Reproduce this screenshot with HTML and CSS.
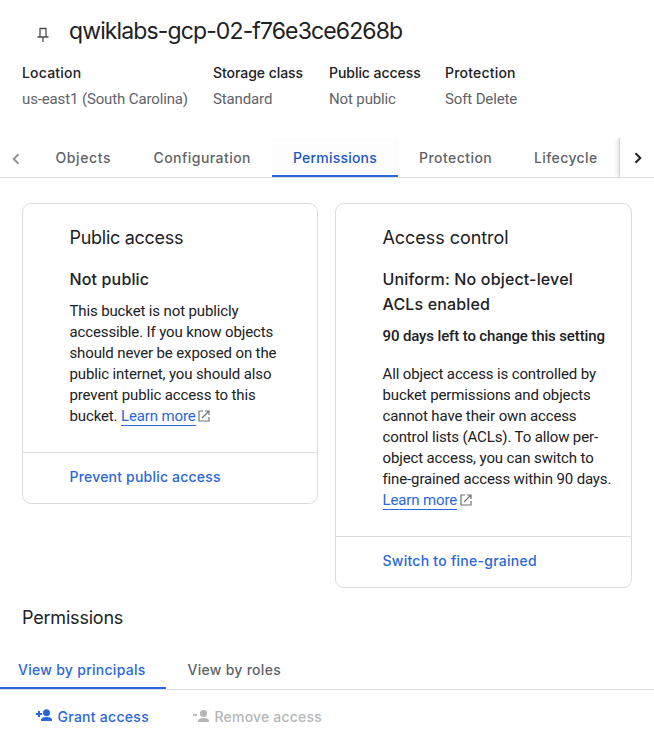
FILE: index.html
```html
<!DOCTYPE html>
<html lang="en">
<head>
<meta charset="utf-8">
<title>Bucket details</title>
<link rel="stylesheet" href="styles.css">
</head>
<body>
<header class="head">
  <svg class="pin" viewBox="0 0 12 16"><path d="M2.500 1.500h7M3 1v8.500M9 1v8.500M.500 10h11M6 10v5" fill="none" stroke="#4c4f52" stroke-width="1.300"/></svg>
  <h1>qwiklabs-gcp-02-f76e3ce6268b</h1>
</header>
<dl class="facts">
  <div><dt class="location">Location</dt><dd>us-east1 (South Carolina)</dd></div>
  <div><dt class="storage">Storage class</dt><dd>Standard</dd></div>
  <div><dt class="storage">Public access</dt><dd>Not public</dd></div>
  <div><dt class="location">Protection</dt><dd>Soft Delete</dd></div>
</dl>
<nav class="tabs">
  <span class="prev"><svg viewBox="0 0 10 12"><path d="M7.500 1.200L2.700 6l4.800 4.800" fill="none" stroke="#969696" stroke-width="2"/></svg></span>
  <a class="tab objects">Objects</a>
  <a class="tab configuration">Configuration</a>
  <a class="tab permissions active">Permissions</a>
  <a class="tab protection">Protection</a>
  <a class="tab lifecycle">Lifecycle</a>
  <span class="next"><svg viewBox="0 0 10 12"><path d="M2.500 1.200L7.300 6l-4.800 4.800" fill="none" stroke="#202124" stroke-width="2"/></svg></span>
</nav>
<main class="cards">
  <section class="card">
    <div class="body">
      <h2 class="public">Public access</h2>
      <h3>Not public</h3>
      <p>This bucket is not publicly<br>accessible. If you know objects<br>should never be exposed on the<br>public internet, you should also<br>prevent public access to this<br>bucket. <a class="learn">Learn more</a><svg class="ext" viewBox="0 0 12 12"><path d="M5 1H1v10h10V7M7 1h4v4M11 1L4 8" fill="none" stroke="#70757a" stroke-width="1.200"/></svg></p>
    </div>
    <div class="action"><a class="prevent">Prevent public access</a></div>
  </section>
  <section class="card">
    <div class="body">
      <h2>Access control</h2>
      <h3>Uniform: No object-level<br>ACLs enabled</h3>
      <p class="days">90 days left to change this setting</p>
      <p>All object access is controlled by<br>bucket permissions and objects<br>cannot have their own access<br>control lists (ACLs). To allow per-<br>object access, you can switch to<br>fine-grained access within 90 days.<br><a class="learn">Learn more</a><svg class="ext" viewBox="0 0 12 12"><path d="M5 1H1v10h10V7M7 1h4v4M11 1L4 8" fill="none" stroke="#70757a" stroke-width="1.200"/></svg></p>
    </div>
    <div class="action"><a class="switch">Switch to fine-grained</a></div>
  </section>
</main>
<h2 class="section">Permissions</h2>
<nav class="views">
  <a class="principals">View by principals</a>
  <a class="roles">View by roles</a>
</nav>
<div class="toolbar">
  <a class="grant"><svg viewBox="0 0 18 14"><path d="M4 2v6M1 5h6" stroke="currentColor" stroke-width="2"/><circle cx="11.500" cy="3.700" r="3.500" fill="currentColor"/><path d="M6 12v-1.300c0-2 3.500-2.700 5.500-2.700s5.500.7 5.500 2.700V12z" fill="currentColor"/></svg><span>Grant access</span></a>
  <a class="remove"><svg viewBox="0 0 18 14"><path d="M1 6h4" stroke="currentColor" stroke-width="1.800"/><circle cx="11.500" cy="4.500" r="3.500" fill="currentColor"/><path d="M6 13v-1.300c0-2 3.500-2.700 5.500-2.700s5.500.7 5.500 2.700V13z" fill="currentColor"/></svg><span>Remove access</span></a>
</div>
</body>
</html>
```
FILE: styles.css
```css
* { box-sizing: border-box; }
body { margin: 0; width: 654px; height: 747px; overflow: hidden; background: #fff; color: #202124; font: 15px/21px Roboto, sans-serif; letter-spacing: -.13px; }
h1, h2, h3, dt, .tabs, .action, .views, .toolbar { font-family: Inter, sans-serif; }
h1, h2, h3, p, dl, dd { margin: 0; white-space: nowrap; }
svg { display: block; flex: none; }

.head { display: flex; height: 62px; padding: 15px 0 0 37px; }
.pin { width: 12px; height: 16px; margin-top: 12px; }
h1 { margin-left: 20px; font-size: 23px; line-height: 32px; font-weight: 400; letter-spacing: -.88px; }

.facts { display: grid; grid-template-columns: 191px 116px 116px auto; height: 76px; padding-left: 22px; }
dt { font-size: 14px; line-height: 22px; font-weight: 500; }
.location { letter-spacing: .2px; }
.storage { letter-spacing: -.05px; }
dd { margin-top: 5px; line-height: 20px; color: #5f6368; }

.tabs { display: flex; height: 40px; border-bottom: 1px solid #dadce0; font-size: 14px; line-height: 40px; font-weight: 500; letter-spacing: .45px; color: #5f6368; white-space: nowrap; }
.prev { width: 35px; padding: 15px 0 0 11px; }
.prev svg, .next svg { width: 10px; height: 12px; }
.tab { height: 39px; padding-left: 21px; }
.objects { width: 98px; padding-left: 20.500px; letter-spacing: .6px; }
.configuration { width: 139px; padding-left: 20.500px; }
.permissions { width: 126px; letter-spacing: .2px; }
.protection { width: 115px; }
.lifecycle { width: 106px; letter-spacing: .4px; }
.active { color: #1a56c4; border-bottom: 2px solid #2a66dd; background: #fdfdfe; }
.next { flex: 1; height: 39px; padding: 14px 0 0 13px; border-left: 1px solid #d0d2d5; box-shadow: -3px 0 4px -1px rgba(0,0,0,.1); clip-path: inset(0 0 0 -6px); }

.cards { display: flex; align-items: flex-start; gap: 17px; padding: 25px 22px 0; height: 420px; }
.card { width: 296px; border: 1px solid #dadce0; border-radius: 9px; }
.card + .card { width: 297px; }
.body { padding: 21px 0 25px 46.500px; }
h2 { font-size: 18px; line-height: 26px; font-weight: 400; letter-spacing: -.05px; }
.public { letter-spacing: -.28px; }
h3 { margin: 16px 0 9px; font-size: 16px; line-height: 25px; font-weight: 500; letter-spacing: .15px; }
.body p { line-height: 21px; }
.body .days { font-weight: 500; margin-bottom: 17px; }
.learn { color: #2a66dd; border-bottom: 1px solid #2a66dd; }
.ext { display: inline-block; width: 12px; height: 12px; margin-left: 2.500px; vertical-align: -1px; }
.action { height: 51px; border-top: 1px solid #dadce0; padding-left: 46.500px; font-size: 14px; line-height: 48px; font-weight: 500; letter-spacing: .2px; color: #2a66dd; }
.switch { letter-spacing: .26px; }

.section { height: 52px; padding: 7px 0 0 22px; line-height: 25px; letter-spacing: -.2px; }
.views { display: flex; height: 40px; border-bottom: 1px solid #dadce0; font-size: 14px; line-height: 40px; font-weight: 500; letter-spacing: .28px; white-space: nowrap; }
.views a { height: 39px; }
.principals { width: 166px; padding-left: 18px; color: #2a66dd; border-bottom: 2px solid #2a66dd; }
.roles { padding-left: 21.500px; color: #5f6368; }
.toolbar { display: flex; padding: 17px 0 0 35px; font-size: 14px; line-height: 20px; font-weight: 500; letter-spacing: .28px; white-space: nowrap; }
.toolbar a { display: flex; }
.toolbar svg { width: 18px; height: 14px; margin: 2px 4.500px 0 0; }
.grant { width: 157px; color: #2a66dd; }
.remove { color: #b5b6b8; letter-spacing: .2px; }
```
